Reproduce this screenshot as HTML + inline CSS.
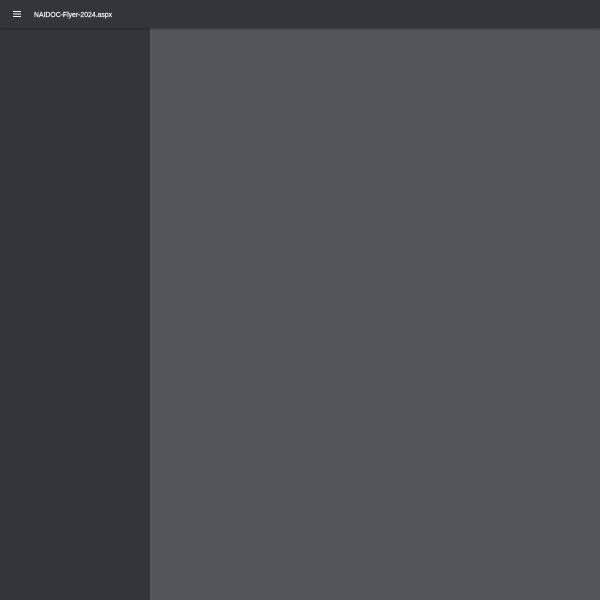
<!DOCTYPE html>
<html lang="en">
<head>
<meta charset="utf-8">
<title>NAIDOC-Flyer-2024.aspx</title>
<style>
html,body{margin:0;padding:0;width:600px;height:600px;overflow:hidden;background:#525659}
#side{position:absolute;left:0;top:28px;width:150px;height:572px;background:#323639}
#main{position:absolute;left:150px;top:28px;width:450px;height:572px;background:#525659}
#bar{position:absolute;left:0;top:0;width:600px;height:28px;background:#323639;box-shadow:0 1px 2px rgba(0,0,0,.35)}
#title{position:absolute;left:34px;top:9.6px;font:500 7.6px/10px "Liberation Sans",sans-serif;color:#f1f3f4;white-space:nowrap;-webkit-text-stroke:.25px #f1f3f4;transform:scaleX(.902);transform-origin:0 0}
#menu{position:absolute;left:13px;top:11px;width:8px;height:6px}
</style>
</head>
<body>
<div id="side"></div>
<div id="main"></div>
<div id="bar">
<svg id="menu" viewBox="0 0 8 6" xmlns="http://www.w3.org/2000/svg"><path d="M0 0h8v1H0zM0 2.5h8v1H0zM0 5h8v1H0z" fill="#f1f3f4"/></svg>
<div id="title">NAIDOC-Flyer-2024.aspx</div>
</div>
</body>
</html>
